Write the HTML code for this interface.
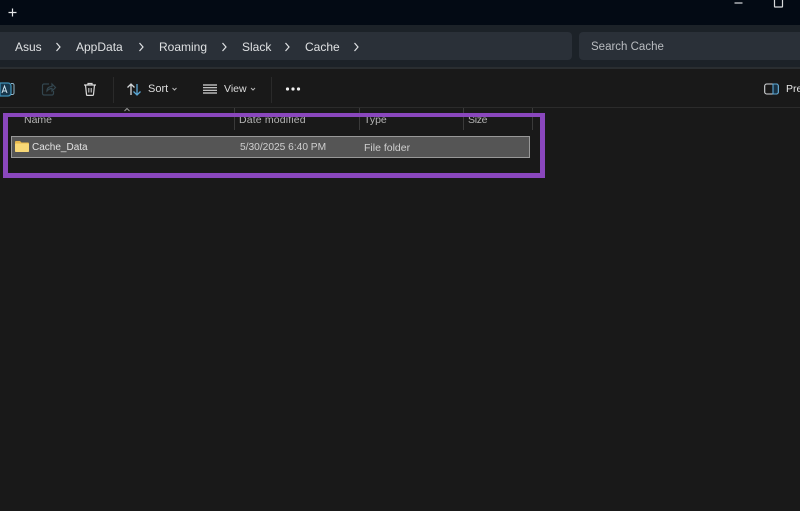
<!DOCTYPE html>
<html><head><meta charset="utf-8">
<style>
html,body{margin:0;padding:0;background:#191919;}
#p{position:relative;width:800px;height:511px;overflow:hidden;background:#191919;font-family:"Liberation Sans",sans-serif;color:#d8d8d8;}
.a{position:absolute;}
.t{position:absolute;white-space:nowrap;line-height:14px;}
svg{position:absolute;overflow:visible;}
.crumb{font-size:12px;color:#dfe1e3;top:40px;}
.col{font-size:10.5px;color:#b4b4b4;top:113px;}
.sep{position:absolute;width:1px;background:#3a3a3a;}
</style></head><body><div id="p">
<div class="a" style="left:0;top:0;width:800px;height:25px;background:#030a14;"></div>
<div class="a" style="left:0;top:25px;width:800px;height:43px;background:#1c2228;"></div>
<div class="a" style="left:0;top:67px;width:800px;height:2px;background:#2a2e31;"></div>
<div class="a" style="left:0;top:32px;width:572px;height:28px;background:#2a3038;border-radius:0 4px 4px 0;"></div>
<div class="a" style="left:579px;top:32px;width:221px;height:28px;background:#2a3038;border-radius:4px 0 0 4px;"></div>

<svg style="left:0;top:0" width="800" height="25"><path d="M12.5 8.500v8M8.500 12.500h8" stroke="#e4e6e8" stroke-width="1.200" fill="none"/><path d="M734.500 3h8" stroke="#d8dadc" stroke-width="1.200"/><path d="M774.500 0v6.500a.5.5 0 0 0 .5.5h7a.5.5 0 0 0 .5-.5V0" stroke="#d8dadc" stroke-width="1.200" fill="none"/></svg>

<span class="t crumb" style="left:15px">Asus</span>
<span class="t crumb" style="left:76px">AppData</span>
<span class="t crumb" style="left:159px">Roaming</span>
<span class="t crumb" style="left:242px">Slack</span>
<span class="t crumb" style="left:305px">Cache</span>
<svg style="left:0;top:40px" width="400" height="14" fill="none" stroke="#dfe1e3" stroke-width="1.200"><path d="M56.500 3l3.500 4-3.500 4M139.500 3l3.500 4-3.500 4M222.500 3l3.500 4-3.500 4M285.500 3l3.500 4-3.500 4M354.500 3l3.500 4-3.500 4"/></svg>
<span class="t" style="left:591px;top:40px;font-size:11.500px;color:#b9bcc0">Search Cache</span>

<svg style="left:0;top:80px" width="320" height="20" fill="none">
<path d="M0 3h8a3 3 0 0 1 3 3v7a3 3 0 0 1-3 3H0z" fill="#17374c" stroke="#3f8fb5" stroke-width="1.300"/>
<path d="M11 3.500h1.500a1.500 1.500 0 0 1 1.500 1.500v8a1.500 1.500 0 0 1-1.500 1.500H11" stroke="#8fb7cc" stroke-width="1"/>
<path d="M2 13l2.500-7 2.500 7M3 11h3" stroke="#cfe3ee" stroke-width="1"/>
<path d="M49 4h-5a1.500 1.500 0 0 0-1.500 1.500v8a1.500 1.500 0 0 0 1.500 1.500h8a1.500 1.500 0 0 0 1.500-1.500V11" stroke="#33464f" stroke-width="1.200"/>
<path d="M47 11c0-3 2-4.500 5-4.500V4l3.500 3.500L52 11V8.500c-2 0-3.500.8-5 2.500z" stroke="#33464f" stroke-width="1.200"/>
<path d="M84 5h12M88 5V3.500h4V5M85.500 5l1 9.500a1 1 0 0 0 1 .9h5a1 1 0 0 0 1-.9l1-9.500" stroke="#d8d8d8" stroke-width="1.200"/>
<path d="M88.800 8v4.500M91.200 8v4.500" stroke="#d8d8d8" stroke-width="1"/>
<path d="M131 15V4M127.500 7.500L131 4l3.500 3.500" stroke="#d5d8da" stroke-width="1.300"/>
<path d="M137 4v11M133.500 11.500L137 15l3.500-3.500" stroke="#5aa6d4" stroke-width="1.300"/>
<path d="M172.500 8l2 2 2-2M251 8l2 2 2-2" stroke="#b5b5b5" stroke-width="1"/>
<path d="M203 5h14M203 7.700h14M203 10.300h14M203 13h14" stroke="#d8d8d8" stroke-width="1.200"/>
<circle cx="287.500" cy="9" r="1.600" fill="#eee"/><circle cx="293" cy="9" r="1.600" fill="#eee"/><circle cx="298.500" cy="9" r="1.600" fill="#eee"/>
</svg>
<div class="sep" style="left:113px;top:77px;height:26px;background:#2a2a2a"></div>
<div class="sep" style="left:271px;top:77px;height:26px;background:#2a2a2a"></div>
<span class="t" style="left:148px;top:82px;font-size:11px;color:#dcdcdc">Sort</span>
<span class="t" style="left:224px;top:82px;font-size:10.500px;color:#dcdcdc">View</span>

<svg style="left:764px;top:83px" width="16" height="12" fill="none"><rect x=".7" y="1" width="13.600" height="10" rx="2" stroke="#d5d8da" stroke-width="1.100"/><path d="M9 1h3.300a2 2 0 0 1 2 2v6a2 2 0 0 1-2 2H9z" stroke="#5aa6d4" stroke-width="1.100" fill="#173042"/></svg>
<span class="t" style="left:786px;top:82px;font-size:10.500px;color:#e6e6e6">Preview</span>

<div class="a" style="left:0;top:107px;width:800px;height:1px;background:#2b2b2b"></div>
<svg style="left:122px;top:107px" width="10" height="6" fill="none"><path d="M2.500 4l2.500-2.500L7.500 4" stroke="#9a9a9a" stroke-width="1"/></svg>
<span class="t col" style="left:24px">Name</span>
<span class="t col" style="left:239px;letter-spacing:.15px">Date modified</span>
<span class="t col" style="left:364px">Type</span>
<span class="t col" style="left:468px;letter-spacing:-.3px">Size</span>
<div class="sep" style="left:234px;top:108px;height:22px"></div>
<div class="sep" style="left:359px;top:108px;height:22px"></div>
<div class="sep" style="left:463px;top:108px;height:22px"></div>
<div class="sep" style="left:532px;top:108px;height:22px"></div>

<div class="a" style="left:11px;top:136px;width:517px;height:20px;background:#555;border:1px solid #989898;"></div>
<svg style="left:15px;top:141px" width="14" height="11"><path d="M0 1a1 1 0 0 1 1-1h4l1.500 1.500H13a1 1 0 0 1 1 1V10a1 1 0 0 1-1 1H1a1 1 0 0 1-1-1z" fill="#e8b94e"/><rect y="2.500" width="14" height="8.500" rx="1" fill="#f8d877"/></svg>
<span class="t" style="left:32px;top:141px;font-size:10px;color:#e2e2e2">Cache_Data</span>
<span class="t" style="left:240px;top:141px;font-size:10.200px;color:#cfcfcf">5/30/2025 6:40 PM</span>
<span class="t" style="left:364px;top:141px;font-size:10.500px;color:#cfcfcf">File folder</span>

<div class="a" style="left:3px;top:113px;width:532px;height:56px;border:solid #8a47bd;border-width:4.500px 5px 5px 5px;box-sizing:content-box;"></div>
</div></body></html>
